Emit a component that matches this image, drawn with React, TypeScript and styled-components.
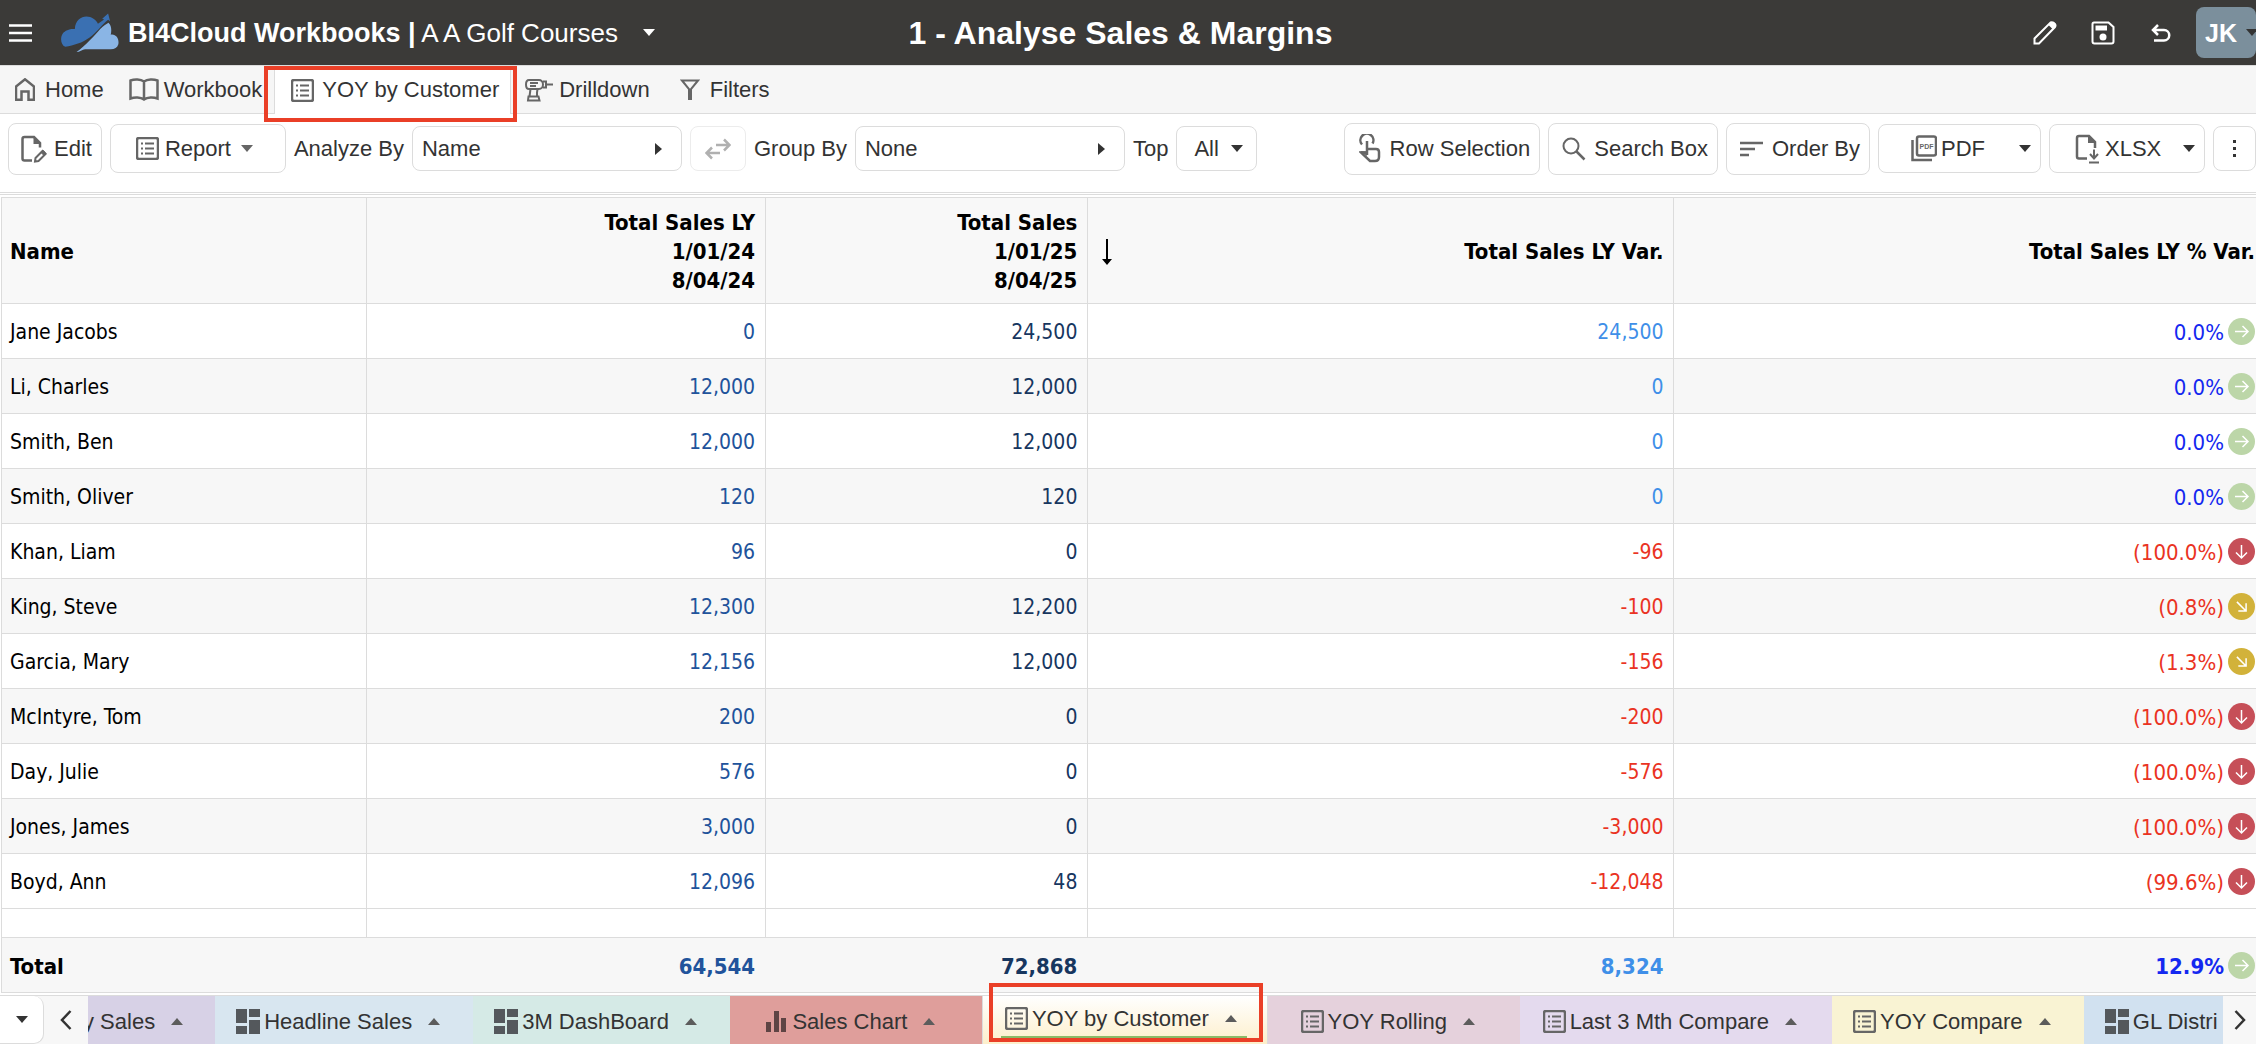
import React from "react";
import styled, { createGlobalStyle, css } from "styled-components";

const LINE = "#dcdcdc";
const INK = "#333333";
const ICON = "#666666";
const MARK = "#ea3f27";

const GlobalStyle = createGlobalStyle`
  *, *::before, *::after { box-sizing: border-box; }
  body { margin: 0; background: #fff; color: ${INK}; font: 22px/28px "Liberation Sans", Arial, sans-serif; }
  button, select { font: inherit; color: inherit; margin: 0; }
  svg { display: block; flex: none; }
`;

const Page = styled.div`
  display: flex;
  flex-direction: column;
  min-height: 100vh;
  overflow-x: clip;
`;

/* ---------- header ---------- */

const Header = styled.header`
  display: grid;
  grid-template-columns: 1fr auto 1fr;
  align-items: center;
  height: 66px;
  background: #3b3a38;
  color: #fff;
  border-bottom: 1px solid ${LINE};
`;

const Brand = styled.div`
  display: flex;
  align-items: center;
  white-space: nowrap;
`;

const PlainButton = styled.button`
  display: flex;
  align-items: center;
  justify-content: center;
  padding: 0;
  border: 0;
  background: none;
`;

const MenuButton = styled(PlainButton)`
  padding: 0 29px 0 9px;
`;

const BrandName = styled.span`
  margin-left: 9px;
  font-size: 26px;
  line-height: 32px;
  strong { font-size: 27px; }
`;

const CompanyButton = styled(PlainButton)`
  padding: 8px 25px;
`;

const Title = styled.h1`
  margin: 0 15px 0 0;
  font-size: 32px;
  line-height: 40px;
  font-weight: bold;
`;

const HeaderTools = styled.div`
  display: flex;
  align-items: center;
  justify-content: flex-end;
`;

const ToolButton = styled(PlainButton)`
  width: 58px;
  height: 40px;
`;

const Avatar = styled(PlainButton)`
  width: 60px;
  height: 51px;
  margin-left: 6px;
  padding-left: 9px;
  gap: 9px;
  justify-content: flex-start;
  overflow: hidden;
  border-radius: 8px;
  background: #7b8f9c;
  font-size: 25px;
  font-weight: bold;
`;

/* ---------- navigation ---------- */

const Nav = styled.nav`
  display: flex;
  height: 48px;
  background: #f6f6f6;
  border-bottom: 1px solid ${LINE};
`;

const NavLink = styled.a<{ $active?: boolean }>`
  display: flex;
  align-items: center;
  gap: 4px;
  padding: 0 12px;
  color: ${INK};
  text-decoration: none;
  white-space: nowrap;
  &:first-child { padding-left: 9px; }
  ${(p) => p.$active && css`
    position: relative;
    height: 48px;
    padding: 0 11px;
    background: #fff;
    border: solid ${LINE};
    border-width: 0 1px;
    &::after {
      content: "";
      position: absolute;
      inset: 0 -7px -8px -11px;
      border: 4px solid ${MARK};
    }
  `}
`;

const IconBox = styled.span`
  display: flex;
  justify-content: center;
  width: 32px;
  flex: none;
`;

/* ---------- toolbar ---------- */

const Toolbar = styled.div`
  display: flex;
  align-items: center;
  gap: 8px;
  height: 79px;
  padding: 0 0 9px 8px;
  border-bottom: 1px solid ${LINE};
  white-space: nowrap;
`;

const ToolbarEnd = styled.div`
  display: flex;
  align-items: center;
  gap: 8px;
  margin-left: auto;
`;

const controlBox = css`
  border: 1px solid ${LINE};
  border-radius: 8px;
  background: #fff;
`;

const Button = styled.button<{ $start?: number }>`
  ${controlBox}
  display: flex;
  align-items: center;
  gap: 4px;
  height: 52px;
  padding: 0 9px 0 ${(p) => p.$start ?? 9}px;
`;

const MenuTrigger = styled(Button)<{ $width: number; $between?: boolean }>`
  height: 49px;
  width: ${(p) => p.$width}px;
  svg:last-child { margin-left: ${(p) => (p.$between ? "auto" : "6px")}; }
`;

const SmallButton = styled.button<{ $width: number; $muted?: boolean }>`
  ${controlBox}
  display: flex;
  align-items: center;
  justify-content: center;
  width: ${(p) => p.$width}px;
  height: 45px;
  padding: 0;
  ${(p) => p.$muted && "border-color: #ececec;"}
`;

const Picker = styled.div<{ $width: number; $end: number }>`
  display: grid;
  align-items: center;
  width: ${(p) => p.$width}px;
  > * { grid-area: 1 / 1; }
  svg { justify-self: end; margin-right: ${(p) => p.$end}px; pointer-events: none; }
`;

const Select = styled.select<{ $start?: number }>`
  ${controlBox}
  appearance: none;
  width: 100%;
  height: 45px;
  padding: 0 30px 0 ${(p) => p.$start ?? 9}px;
`;

/* ---------- report table ---------- */

const Report = styled.main`
  flex: 1;
  margin-top: 1px;
  padding: 2px 0 2px 1px;
  border-top: 1px solid ${LINE};
`;

const Table = styled.table`
  width: 100%;
  table-layout: fixed;
  border-spacing: 0;
  border: solid ${LINE};
  border-width: 1px 0 0 1px;
  color: #000;
  font-family: "DejaVu Sans Condensed", "Noto Sans", sans-serif;
  font-size: 21px;
  line-height: 29px;
  font-variant-numeric: tabular-nums;
`;

const Col = styled.col<{ $share?: number }>`
  width: ${(p) => (p.$share ? `${p.$share}%` : "auto")};
`;

const cell = css`
  padding: 2px 10px 0 8px;
  border: solid ${LINE};
  border-width: 0 1px 1px 0;
  text-align: right;
  &:first-child { text-align: left; }
  &:last-child { padding-right: 1px; border-right: 0; }
`;

const Th = styled.th`
  ${cell}
  height: 106px;
  background: #f8f8f8;
  font-size: 22px;
  white-space: pre-line;
`;

const Row = styled.tr`
  &:nth-child(even) { background: #f7f7f7; }
`;

const FillerRow = styled.tr`
  height: 29px;
  background: #fff;
`;

const Td = styled.td<{ $color?: string }>`
  ${cell}
  color: ${(p) => p.$color ?? "#000"};
`;

const BodyTd = styled(Td)`
  height: 55px;
`;

const TotalTd = styled(Td)`
  height: 55px;
  border-right: 0;
  background: #f7f7f7;
  font-size: 22px;
  font-weight: bold;
  padding-right: 11px;
`;

const Sorted = styled.span`
  display: flex;
  align-items: center;
  justify-content: space-between;
  padding-left: 6px;
`;

const Percent = styled.span`
  display: flex;
  align-items: flex-start;
  justify-content: flex-end;
  gap: 4px;
  font-size: 22px;
`;

/* ---------- sheet tabs ---------- */

const SheetBar = styled.footer`
  display: flex;
  height: 49px;
  background: #f7f7f7;
  border-top: 1px solid ${LINE};
`;

const SheetMenu = styled(PlainButton)`
  width: 44px;
  border: 1px solid ${LINE};
  border-width: 0 1px 1px 0;
  border-radius: 0 10px 10px 0;
  background: #fff;
`;

const Scroll = styled(PlainButton)<{ $width: number }>`
  width: ${(p) => p.$width}px;
  flex: none;
`;

const Sheets = styled.div`
  display: flex;
  flex: 1;
  min-width: 0;
  overflow-x: clip;
  overflow-y: visible;
`;

const Sheet = styled.button<{ $fill: string; $min?: number; $cut?: "start" | "end"; $active?: boolean }>`
  display: flex;
  flex: none;
  align-items: center;
  justify-content: center;
  min-width: ${(p) => p.$min ?? 252}px;
  padding: 0 33px 0 21px;
  border: 0;
  background: ${(p) => p.$fill};
  white-space: nowrap;
  ${(p) => p.$cut === "start" && "min-width: 0; margin-left: -5px; padding: 0 32px 0 0;"}
  ${(p) => p.$cut === "end" && "min-width: 0; flex: 1; padding: 0 0 0 21px; justify-content: flex-start;"}
  ${(p) => p.$active && css`
    position: relative;
    align-items: flex-start;
    padding: 0 20px 0 18px;
    border: solid ${LINE};
    border-width: 0 1px;
    &::after {
      content: "";
      position: absolute;
      inset: -13px 4px 2px 6px;
      border: 4px solid ${MARK};
    }
  `}
`;

const SheetLabel = styled.span<{ $active?: boolean }>`
  display: flex;
  align-items: center;
  gap: 4px;
  height: 43px;
  padding-top: 3px;
  ${(p) => p.$active && "padding: 5px 10px 0 4px; border-bottom: 3px solid #8aba68;"}
`;

const SheetCaret = styled.span`
  margin-left: 12px;
`;

/* ---------- icons ---------- */

const Caret = ({ dir = "down", color = INK }: { dir?: "down" | "up" | "right"; color?: string }) => {
  const d = { down: "M0 0H12L6 7Z", up: "M0 7H12L6 0Z", right: "M0 0V12L7 6Z" }[dir];
  const side = dir === "right";
  return (
    <svg width={side ? 7 : 12} height={side ? 12 : 7} fill={color} aria-hidden="true">
      <path d={d} />
    </svg>
  );
};

const Icon = ({ w, h, color = ICON, children }: { w: number; h: number; color?: string; children: React.ReactNode }) => (
  <svg width={w} height={h} viewBox={`0 0 ${w} ${h}`} fill="none" stroke={color} strokeWidth="2" aria-hidden="true">
    {children}
  </svg>
);

const ListIcon = ({ color }: { color?: string }) => (
  <Icon w={23} h={23} color={color}>
    <rect x="1" y="1" width="21" height="21" rx="2" strokeWidth="2.500" />
    <path d="M9 6.5H18M9 11.5H18M9 16.5H18M5 6.5H7M5 11.5H7M5 16.5H7" />
  </Icon>
);

const DashIcon = () => (
  <svg width="24" height="25" fill="#54585c" aria-hidden="true">
    <path d="M0 0H11V14H0ZM13 0H24V8H13ZM0 17H11V25H0ZM13 11H24V25H13Z" />
  </svg>
);

const ChartIcon = () => (
  <svg width="24" height="21" fill="#5e4444" aria-hidden="true">
    <path d="M2 11H7V21H2ZM10 0H15V21H10ZM17 7H22V21H17Z" />
  </svg>
);

const HomeIcon = () => (
  <Icon w={20} h={23}>
    <path d="M1 21.8V8.5L10 1.3L19 8.5V21.8H13.5V13.5H6.5V21.8Z" strokeWidth="2.500" />
  </Icon>
);

const BookIcon = () => (
  <Icon w={30} h={23}>
    <path d="M15 3.500C11.500 1 5.500 1 1.500 2.500V20.500C5.500 19 11.500 19 15 21.500C18.500 19 24.500 19 28.500 20.500V2.500C24.500 1 18.500 1 15 3.500ZM15 3.500V21.500" strokeWidth="2.500" />
  </Icon>
);

const DrillIcon = () => (
  <Icon w={28} h={24}>
    <path d="M4 2H14C16 2 18 3.500 18 6.500S16 11 14 11H4C2 11 1 9 1 6.500S2 2 4 2ZM5 5H13M5 8H11M18 3.500H21V9.500H18M21 6.500H28M5.500 11L4.500 18.500M12.500 11L12 14.500V18.500M3.500 18.500H13.500L14.500 22.500H3Z" />
  </Icon>
);

const FilterIcon = () => (
  <Icon w={20} h={21}>
    <path d="M2 1.500H18L11 10V20H9V10Z" />
  </Icon>
);

const EditDocIcon = () => (
  <Icon w={26} h={28}>
    <path d="M11 25.500H3.500Q1.500 25.500 1.500 23.500V4Q1.500 2 3.500 2H13L19 8V12.500" strokeWidth="2.500" />
    <path d="M12.500 1.500V9H19.500Z" fill={ICON} stroke="none" />
    <path d="M14 26.500L14.500 23L21.500 16L24.500 19L17.500 26L14 26.500Z" />
    <path d="M20 17.500L23 20.500L25 18.500L22.500 15.500Z" fill={ICON} strokeWidth="1" />
  </Icon>
);

const SwapIcon = () => (
  <Icon w={26} h={22} color="#b0b0b0">
    <path d="M11 7H24M19 1.500L24.500 7L19 12.500M15 15H2M7 9.500L1.500 15L7 20.500" strokeWidth="2.500" />
  </Icon>
);

const TouchIcon = () => (
  <Icon w={22} h={29}>
    <path d="M3 10.500A6.500 6.500 0 1 1 13.500 9.500M8 7V21M8 15H17Q20 15 20 18V23Q20 27 16 27H11L2 18.500H7" strokeWidth="2.500" />
    <path d="M1 17L8 17.500V22Z" fill={ICON} stroke="none" />
  </Icon>
);

const SearchIcon = () => (
  <Icon w={24} h={24}>
    <circle cx="9" cy="9" r="7.500" />
    <path d="M14 14L22.500 22.500" strokeWidth="2.500" />
  </Icon>
);

const OrderIcon = () => (
  <Icon w={24} h={16}>
    <path d="M0 2H23M0 8H15M0 14H9" strokeWidth="2.500" />
  </Icon>
);

const PdfIcon = () => (
  <Icon w={26} h={27}>
    <rect x="6" y="1.500" width="19" height="19" rx="2" strokeWidth="2.500" />
    <path d="M1.500 5V25H21" strokeWidth="2.500" />
    <text x="15.500" y="14" textAnchor="middle" fontSize="7" fontWeight="bold" fill={ICON} stroke="none">PDF</text>
  </Icon>
);

const XlsxIcon = () => (
  <Icon w={26} h={30}>
    <path d="M12 24.500H4Q2 24.500 2 22.500V4Q2 2 4 2H14L20 8V14" strokeWidth="2.500" />
    <path d="M13 1.500V9H20.500Z" fill={ICON} stroke="none" />
    <path d="M19 15.500V24M15 20L19 24.500L23 20M14 28.500H24" />
  </Icon>
);

const Logo = () => (
  <svg width="58" height="40" viewBox="183 38 176 120" aria-hidden="true">
    <path fill="#3a70b2" d="M196 140C182 134 180 112 188 100C196 88 214 84 225 86C226 60 244 48 260 48C276 48 290 58 295 70L314 57L308 55L326 39L332 62L326 58C306 74 292 96 270 112C248 128 222 136 196 140Z" />
    <path fill="#8ab5e5" d="M230 156C258 136 286 104 302 86C312 76 322 70 327 67C336 74 337 90 334 103C350 100 360 116 357 132C354 142 346 147 334 147H256C248 148 240 156 230 156Z" />
  </svg>
);

const SortArrow = () => (
  <svg width="10" height="26" fill="#000" aria-label="sorted descending">
    <path d="M4 0H6V20H10L5 26L0 20H4Z" />
  </svg>
);

type Trend = "flat" | "down" | "slip";
const TREND: Record<Trend, [string, number]> = {
  flat: ["#bcd6a8", 0],
  down: ["#c64f58", 90],
  slip: ["#d2b23a", 45],
};

const TrendIcon = ({ trend }: { trend: Trend }) => (
  <svg width="27" height="27" viewBox="0 0 27 27" role="img" aria-label={trend}>
    <circle cx="13.500" cy="13.500" r="13.500" fill={TREND[trend][0]} />
    <path
      d="M7 13.500H19.500M14.500 8L20 13.500L14.500 19"
      fill="none"
      stroke="#fff"
      strokeWidth="1.500"
      transform={`rotate(${TREND[trend][1]} 13.500 13.500)`}
    />
  </svg>
);

/* ---------- data ---------- */

const rows: [string, string, string, string, string, Trend][] = [
  ["Jane Jacobs", "0", "24,500", "24,500", "0.0%", "flat"],
  ["Li, Charles", "12,000", "12,000", "0", "0.0%", "flat"],
  ["Smith, Ben", "12,000", "12,000", "0", "0.0%", "flat"],
  ["Smith, Oliver", "120", "120", "0", "0.0%", "flat"],
  ["Khan, Liam", "96", "0", "-96", "(100.0%)", "down"],
  ["King, Steve", "12,300", "12,200", "-100", "(0.8%)", "slip"],
  ["Garcia, Mary", "12,156", "12,000", "-156", "(1.3%)", "slip"],
  ["McIntyre, Tom", "200", "0", "-200", "(100.0%)", "down"],
  ["Day, Julie", "576", "0", "-576", "(100.0%)", "down"],
  ["Jones, James", "3,000", "0", "-3,000", "(100.0%)", "down"],
  ["Boyd, Ann", "12,096", "48", "-12,048", "(99.6%)", "down"],
];

const LY = "#21539b";
const TY = "#17365f";
const RED = "#ea3323";
const UP = "#3f8fe8";
const PCT = "#1428f0";

type SheetInfo = {
  name: string;
  fill: string;
  icon?: React.ReactNode;
  active?: boolean;
  cut?: "start" | "end";
  min?: number;
};

const sheets: SheetInfo[] = [
  { name: "y Sales", fill: "#d7d1e6", cut: "start" },
  { name: "Headline Sales", fill: "#d8e6f0", icon: <DashIcon /> },
  { name: "3M DashBoard", fill: "#d5eae6", icon: <DashIcon /> },
  { name: "Sales Chart", fill: "#df9e9b", icon: <ChartIcon /> },
  { name: "YOY by Customer", fill: "linear-gradient(#fff, #fdefcb)", icon: <ListIcon />, active: true },
  { name: "YOY Rolling", fill: "#e5d1dc", icon: <ListIcon /> },
  { name: "Last 3 Mth Compare", fill: "#e4daee", icon: <ListIcon />, min: 312 },
  { name: "YOY Compare", fill: "#f9f3d3", icon: <ListIcon /> },
  { name: "GL Distri", fill: "#d1e1f0", icon: <DashIcon />, cut: "end" },
];

export default function App() {
  return (
    <Page>
      <GlobalStyle />
      <Header>
        <Brand>
          <MenuButton aria-label="Menu">
            <Icon w={23} h={18} color="#fff">
              <path d="M0 1.500H23M0 9H23M0 16.500H23" strokeWidth="2.500" />
            </Icon>
          </MenuButton>
          <Logo />
          <BrandName>
            <strong>BI4Cloud Workbooks |</strong> A A Golf Courses
          </BrandName>
          <CompanyButton aria-label="Change company">
            <Caret color="#fff" />
          </CompanyButton>
        </Brand>
        <Title>1 - Analyse Sales &amp; Margins</Title>
        <HeaderTools>
          <ToolButton aria-label="Edit">
            <Icon w={24} h={24} color="#fff">
              <path d="M1.500 22.500V17.500L17.500 1.500Q20 .5 22 3Q23 4.500 22 6L6 22.500Z" />
              <path d="M15.500 4L20 8.500L23 5.500Q23.500 1 18.500 1Z" fill="#fff" stroke="none" />
            </Icon>
          </ToolButton>
          <ToolButton aria-label="Save">
            <Icon w={24} h={24} color="#fff">
              <path d="M3 1.500H17.500L22.500 6V20.500Q22.500 22.500 20.500 22.500H3.500Q1.500 22.500 1.500 20.500V3Q1.500 1.500 3 1.500Z" />
              <path d="M4.500 4.500H16V9.500H4.500Z" fill="#fff" stroke="none" />
              <circle cx="12" cy="16" r="3.500" fill="#fff" stroke="none" />
            </Icon>
          </ToolButton>
          <ToolButton aria-label="Undo">
            <Icon w={20} h={18} color="#fff">
              <path d="M7 1L2 6L7 11M2 6H13A5 5 0 0 1 13 16.500H3" strokeWidth="2.500" />
            </Icon>
          </ToolButton>
          <Avatar>
            JK
            <Caret />
          </Avatar>
        </HeaderTools>
      </Header>

      <Nav>
        <NavLink href="#home"><IconBox><HomeIcon /></IconBox>Home</NavLink>
        <NavLink href="#workbook"><IconBox><BookIcon /></IconBox>Workbook</NavLink>
        <NavLink href="#report" $active><IconBox><ListIcon /></IconBox>YOY by Customer</NavLink>
        <NavLink href="#drilldown"><IconBox><DrillIcon /></IconBox>Drilldown</NavLink>
        <NavLink href="#filters"><IconBox><FilterIcon /></IconBox>Filters</NavLink>
      </Nav>

      <Toolbar>
        <Button><IconBox><EditDocIcon /></IconBox>Edit</Button>
        <MenuTrigger $width={176} $start={18}>
          <IconBox><ListIcon /></IconBox>Report<Caret color={ICON} />
        </MenuTrigger>
        <label htmlFor="analyze">Analyze By</label>
        <Picker $width={270} $end={20}>
          <Select id="analyze"><option>Name</option></Select>
          <Caret dir="right" />
        </Picker>
        <SmallButton $width={56} $muted aria-label="Swap"><SwapIcon /></SmallButton>
        <label htmlFor="group">Group By</label>
        <Picker $width={270} $end={20}>
          <Select id="group"><option>None</option></Select>
          <Caret dir="right" />
        </Picker>
        <label htmlFor="top">Top</label>
        <Picker $width={81} $end={14}>
          <Select id="top" $start={17}><option>All</option></Select>
          <Caret />
        </Picker>
        <ToolbarEnd>
          <Button><IconBox><TouchIcon /></IconBox>Row Selection</Button>
          <Button><IconBox><SearchIcon /></IconBox>Search Box</Button>
          <Button><IconBox><OrderIcon /></IconBox>Order By</Button>
          <MenuTrigger $width={163} $start={26} $between>
            <IconBox><PdfIcon /></IconBox>PDF<Caret />
          </MenuTrigger>
          <MenuTrigger $width={156} $start={19} $between>
            <IconBox><XlsxIcon /></IconBox>XLSX<Caret />
          </MenuTrigger>
          <SmallButton $width={43} aria-label="More">
            <svg width="3" height="18" fill={INK} aria-hidden="true">
              <path d="M0 0H3V3H0ZM0 7H3V10H0ZM0 14H3V17H0Z" />
            </svg>
          </SmallButton>
        </ToolbarEnd>
      </Toolbar>

      <Report>
        <Table>
          <colgroup>
            <Col $share={16.2} />
            <Col $share={17.7} />
            <Col $share={14.3} />
            <Col $share={26} />
            <Col />
          </colgroup>
          <thead>
            <tr>
              <Th>Name</Th>
              <Th>{"Total Sales LY\n1/01/24\n8/04/24"}</Th>
              <Th>{"Total Sales\n1/01/25\n8/04/25"}</Th>
              <Th><Sorted><SortArrow />Total Sales LY Var.</Sorted></Th>
              <Th>Total Sales LY % Var.</Th>
            </tr>
          </thead>
          <tbody>
            {rows.map(([name, ly, ty, diff, pct, trend]) => (
              <Row key={name}>
                <BodyTd>{name}</BodyTd>
                <BodyTd $color={LY}>{ly}</BodyTd>
                <BodyTd $color={TY}>{ty}</BodyTd>
                <BodyTd $color={diff.startsWith("-") ? RED : UP}>{diff}</BodyTd>
                <BodyTd $color={pct.startsWith("(") ? RED : PCT}>
                  <Percent>{pct}<TrendIcon trend={trend} /></Percent>
                </BodyTd>
              </Row>
            ))}
            <FillerRow><Td /><Td /><Td /><Td /><Td /></FillerRow>
          </tbody>
          <tfoot>
            <tr>
              <TotalTd>Total</TotalTd>
              <TotalTd $color={LY}>64,544</TotalTd>
              <TotalTd $color={TY}>72,868</TotalTd>
              <TotalTd $color={UP}>8,324</TotalTd>
              <TotalTd $color={PCT}><Percent>12.9%<TrendIcon trend="flat" /></Percent></TotalTd>
            </tr>
          </tfoot>
        </Table>
      </Report>

      <SheetBar>
        <SheetMenu aria-label="All sheets"><Caret /></SheetMenu>
        <Scroll $width={44} aria-label="Scroll left">
          <Icon w={12} h={20} color={INK}><path d="M10.500 1L2 10L10.500 19" strokeWidth="2.500" /></Icon>
        </Scroll>
        <Sheets>
          {sheets.map((s) => (
            <Sheet key={s.name} $fill={s.fill} $cut={s.cut} $min={s.min} $active={s.active}>
              <SheetLabel $active={s.active}>
                {s.icon}
                {s.name}
                {s.cut !== "end" && <SheetCaret><Caret dir="up" color="#5c5c5c" /></SheetCaret>}
              </SheetLabel>
            </Sheet>
          ))}
        </Sheets>
        <Scroll $width={33} aria-label="Scroll right">
          <Icon w={12} h={20} color={INK}><path d="M1.500 1L10 10L1.500 19" strokeWidth="2.500" /></Icon>
        </Scroll>
      </SheetBar>
    </Page>
  );
}
